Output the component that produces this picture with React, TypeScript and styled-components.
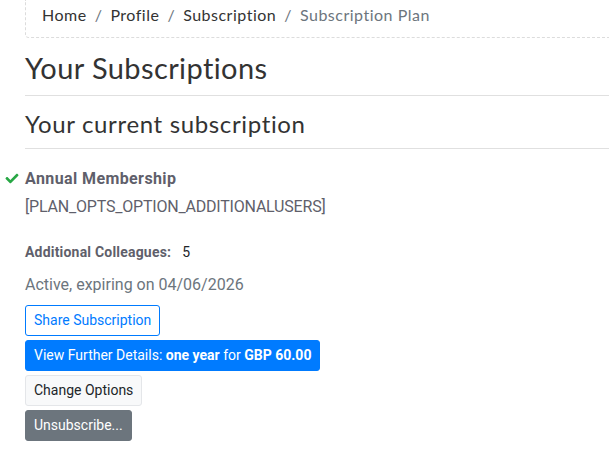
import * as React from "react";
import styled, { createGlobalStyle } from "styled-components";
import { FaCheck } from "react-icons/fa";

const GlobalStyle = createGlobalStyle`
  html, body {
    margin: 0;
    padding: 0;
    background: #fff;
    overflow: hidden;
  }
  body {
    font-family: Roboto, "Noto Sans", sans-serif;
    color: #212529;
  }
`;

const Page = styled("div")`
  padding: 0 0 0 25px;
`;

const Crumbs = styled("ol")`
  display: flex;
  align-items: center;
  list-style: none;
  margin: 0;
  padding: 0 16px 8px;
  height: 29px;
  border: 1px dashed #dcdcdc;
  border-top: none;
  border-right: none;
  border-radius: 0 0 0 4px;
  font-family: Lato, sans-serif;
  font-size: 16px;
  letter-spacing: 0.5px;
`;

interface CrumbProps {
  readonly active?: boolean;
}

const Crumb = styled("li")<CrumbProps>`
  color: ${({ active }) => (active ? "#6c757d" : "#333")};

  &:not(:first-child)::before {
    content: "/";
    color: #6c757d;
    padding: 0 8px;
  }
`;

const Heading = styled("h3")`
  font-family: Lato, sans-serif;
  font-weight: 400;
  font-size: 29px;
  line-height: 1.2;
  letter-spacing: 0.4px;
  color: #333;
  margin: 13px 0 0;
  padding-bottom: 9px;
  border-bottom: 1px solid #e0e0e0;
`;

const SubHeading = styled(Heading)`
  font-size: 24px;
  letter-spacing: 0.65px;
  margin-top: 14px;
  padding-bottom: 9px;
`;

const Plan = styled("div")`
  margin-top: 18px;
  color: #5f5f6b;
  font-size: 16px;
  line-height: 1.5;
`;

const PlanName = styled("div")`
  position: relative;
  font-weight: 700;
  letter-spacing: 0.4px;
`;

const Tick = styled(FaCheck)`
  position: absolute;
  left: -20px;
  top: 5px;
  width: 14px;
  height: 13px;
  color: #28a745;
`;

const Options = styled("div")`
  margin-top: 4px;
  letter-spacing: -0.2px;
`;

const Detail = styled("div")`
  margin-top: 25px;
  font-size: 14px;
  display: flex;
  gap: 11px;
`;

const DetailLabel = styled("span")`
  font-weight: 700;
  letter-spacing: 0.2px;
  color: #5f5f6b;
`;

const DetailValue = styled("span")`
  color: #212529;
`;

const Status = styled("div")`
  margin-top: 13px;
  font-size: 16px;
  line-height: 1.5;
  color: #6c757d;
`;

const Actions = styled("div")`
  margin-top: 8px;
  display: flex;
  flex-direction: column;
  align-items: flex-start;
  gap: 4px;
`;

type Variant = "outline" | "primary" | "light" | "secondary";

const palette: Record<Variant, { bg: string; fg: string; border: string }> = {
  outline: { bg: "#fff", fg: "#007bff", border: "#007bff" },
  primary: { bg: "#007bff", fg: "#fff", border: "#007bff" },
  light: { bg: "#f8f9fa", fg: "#212529", border: "#e4e6e9" },
  secondary: { bg: "#6c757d", fg: "#fff", border: "#6c757d" },
};

interface ButtonProps {
  readonly variant: Variant;
}

const Button = styled("button")<ButtonProps>`
  font-family: Roboto, "Noto Sans", sans-serif;
  font-size: 14px;
  line-height: 21px;
  padding: 4px 8px;
  border-radius: 3px;
  border: 1px solid ${({ variant }) => palette[variant].border};
  background: ${({ variant }) => palette[variant].bg};
  color: ${({ variant }) => palette[variant].fg};
  cursor: pointer;

  b {
    font-weight: 700;
  }
`;

export default function App(): JSX.Element {
  return (
    <Page>
      <GlobalStyle />
      <Crumbs>
        <Crumb>Home</Crumb>
        <Crumb>Profile</Crumb>
        <Crumb>Subscription</Crumb>
        <Crumb active>Subscription Plan</Crumb>
      </Crumbs>

      <Heading>Your Subscriptions</Heading>
      <SubHeading>Your current subscription</SubHeading>

      <Plan>
        <PlanName>
          <Tick />
          Annual Membership
        </PlanName>
        <Options>[PLAN_OPTS_OPTION_ADDITIONALUSERS]</Options>
      </Plan>

      <Detail>
        <DetailLabel>Additional Colleagues:</DetailLabel>
        <DetailValue>5</DetailValue>
      </Detail>

      <Status>Active, expiring on 04/06/2026</Status>

      <Actions>
        <Button variant="outline">Share Subscription</Button>
        <Button variant="primary">
          View Further Details: <b>one year</b> for <b>GBP 60.00</b>
        </Button>
        <Button variant="light">Change Options</Button>
        <Button variant="secondary">Unsubscribe...</Button>
      </Actions>
    </Page>
  );
}
